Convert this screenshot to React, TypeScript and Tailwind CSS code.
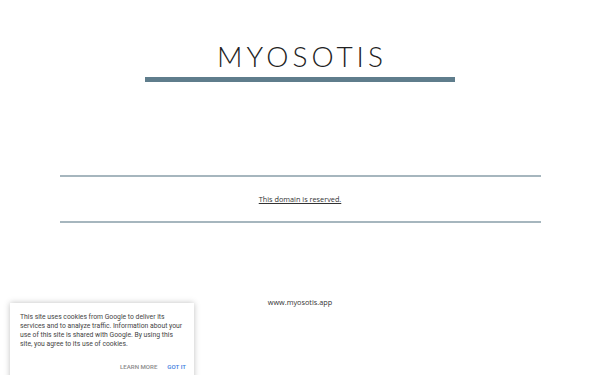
import React from "react";

export default function App() {
  return (
    <div className="relative h-[375px] w-[600px] overflow-hidden bg-white" style={{ fontFamily: '"Open Sans", "Noto Sans", sans-serif' }}>
      <div className="flex flex-col items-center pt-[43px]">
        <h1
          className="pl-[4px] text-[28px] leading-[27px] font-[300] tracking-[4px] text-[#222]"
          style={{ fontFamily: 'Lato, "Open Sans", sans-serif' }}
        >
          MYOSOTIS
        </h1>
        <div className="mt-[7px] h-[5px] w-[310px] bg-[#5f7d8c]" />
      </div>
      <div className="mx-auto mt-[93px] w-[481px] border-t-2 border-b-2 border-[#a6b6be] py-[16px] text-center text-[7.3px] leading-[12px]">
        <a className="text-[#333] underline underline-offset-1">This domain is reserved.</a>
      </div>
      <div className="mt-[73px] text-center text-[7.3px] leading-[12px] text-[#333]">www.myosotis.app</div>

      <div
        className="absolute left-[10px] top-[303px] w-[184px] bg-white pl-[10px] pr-[8px] pt-[10px] pb-[20px] shadow-[0_0_6px_rgba(0,0,0,0.25)]"
        style={{ fontFamily: 'Roboto, "Liberation Sans", sans-serif' }}
      >
        <p className="text-[6.8px] leading-[9px] text-[#444]">
          This site uses cookies from Google to deliver its services and to analyze traffic. Information about your use of this site is shared with Google. By using this site, you agree to its use of cookies.
        </p>
        <div className="mt-[13px] flex justify-end gap-[10px] text-[6.1px] font-medium leading-[9px]">
          <span className="text-[#8a8a8a]">LEARN MORE</span>
          <span className="text-[#3d7de0]">GOT IT</span>
        </div>
      </div>
    </div>
  );
}
